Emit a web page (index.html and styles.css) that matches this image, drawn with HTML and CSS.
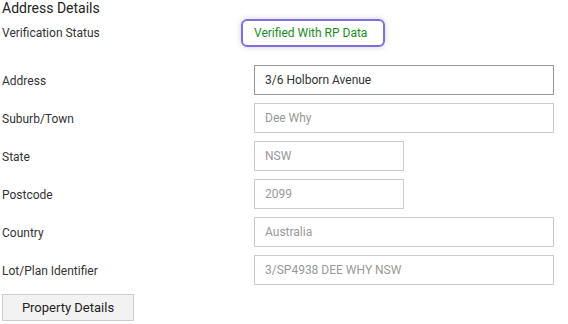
FILE: index.html
```html
<!DOCTYPE html>
<html lang="en">
<head>
  <meta charset="UTF-8">
  <title>Address Details</title>
  <link rel="stylesheet" href="styles.css">
</head>
<body>

  <div class="panel">
    <h3>Address Details</h3>

    <div class="status-row">
      <span class="status-label">Verification Status</span>
      <span class="badge">Verified With RP Data</span>
    </div>

    <div class="fields">
      <div class="row">
        <label for="address">Address</label>
        <input type="text" id="address" class="wide active" value="3/6 Holborn Avenue">
      </div>
      <div class="row">
        <label for="suburb">Suburb/Town</label>
        <input type="text" id="suburb" class="wide" value="Dee Why" disabled>
      </div>
      <div class="row">
        <label for="state">State</label>
        <input type="text" id="state" class="narrow" value="NSW" disabled>
      </div>
      <div class="row">
        <label for="postcode">Postcode</label>
        <input type="text" id="postcode" class="narrow" value="2099" disabled>
      </div>
      <div class="row">
        <label for="country">Country</label>
        <input type="text" id="country" class="wide" value="Australia" disabled>
      </div>
      <div class="row">
        <label for="lot">Lot/Plan Identifier</label>
        <input type="text" id="lot" class="wide" value="3/SP4938 DEE WHY NSW" disabled>
      </div>
    </div>

    <button class="prop-btn">Property Details</button>
  </div>

</body>
</html>
```

FILE: styles.css
```css
body {
  font-family: Roboto, 'Liberation Sans', sans-serif;
  background-color: white;
  margin: 0;
  padding: 0 2px;
  color: #333;
}

h3 {
  margin: 0;
  font-size: 14px;
  line-height: 17px;
  font-weight: 400;
  color: #222;
}

.status-row {
  display: flex;
  align-items: center;
  margin-top: 2px;
  height: 28px;
  font-size: 12px;
}

.status-label {
  width: 239px;
}

.badge {
  box-sizing: border-box;
  width: 144px;
  height: 28px;
  line-height: 24px;
  padding: 0 11px;
  border: 2px solid #7d6ee3;
  border-radius: 6px;
  color: #18901a;
  box-shadow: 0 0 6px rgba(0,0,0,0.18);
}

.fields {
  display: flex;
  flex-direction: column;
  gap: 8px;
  margin-top: 18px;
}

.row {
  display: flex;
  align-items: center;
  font-size: 12px;
}

.row label {
  width: 252px;
  padding-top: 1px;
}

input[type="text"] {
  box-sizing: border-box;
  height: 30px;
  padding: 0 10px;
  margin: 0;
  border: 1px solid #ccc;
  border-radius: 0;
  background-color: white;
  font-family: Roboto, 'Liberation Sans', sans-serif;
  font-size: 12px;
  color: #999;
  outline: none;
}

input.active {
  border-color: #999;
  color: #333;
}

.wide {
  width: 300px;
}

.narrow {
  width: 150px;
}

.prop-btn {
  display: block;
  width: 132px;
  height: 27px;
  margin-top: 9px;
  padding: 0;
  border: 1px solid #ccc;
  background-color: #f2f2f2;
  font-family: Roboto, 'Liberation Sans', sans-serif;
  font-size: 13px;
  color: #222;
  cursor: pointer;
}
```
